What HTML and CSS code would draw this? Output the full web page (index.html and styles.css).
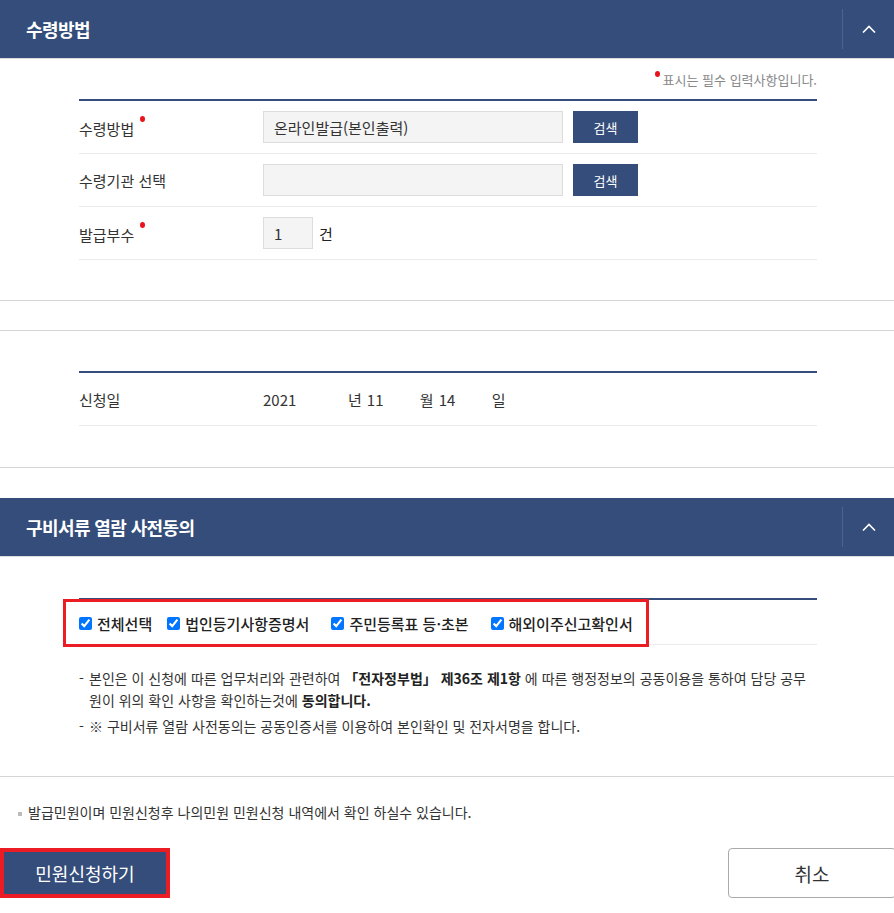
FILE: index.html
```html
<!DOCTYPE html>
<html lang="ko">
<head>
    <meta charset="UTF-8">
    <meta name="viewport" content="width=device-width, initial-scale=1.0">
    <title>민원신청</title>
    <link rel="stylesheet" href="styles.css">
</head>
<body>

    <div class="panel-head">
        <h2>수령방법</h2>
        <button type="button" class="toggle" aria-label="접기">
            <svg width="14" height="8" viewBox="0 0 14 8"><polyline points="1,7.5 7,1.5 13,7.5" fill="none" stroke="#fff" stroke-width="1.6"/></svg>
        </button>
    </div>

    <p class="req-note"><span class="dot"></span>표시는 필수 입력사항입니다.</p>

    <div class="form-box">
        <div class="form-row">
            <div class="label">수령방법<span class="dot"></span></div>
            <input type="text" class="text-input" value="온라인발급(본인출력)" readonly>
            <button type="button" class="btn-search">검색</button>
        </div>
        <div class="form-row">
            <div class="label">수령기관 선택</div>
            <input type="text" class="text-input" value="" readonly>
            <button type="button" class="btn-search">검색</button>
        </div>
        <div class="form-row">
            <div class="label">발급부수<span class="dot"></span></div>
            <input type="text" class="text-input count-input" value="1">
            <span class="unit">건</span>
        </div>
    </div>

    <div class="blank"></div>

    <div class="form-box date-box">
        <div class="form-row">
            <div class="label">신청일</div>
            <div class="date">
                <span class="num year">2021</span><span class="du">년</span><span class="num">11</span><span class="du">월</span><span class="num">14</span><span class="du">일</span>
            </div>
        </div>
    </div>

    <div class="divider"></div>

    <div class="panel-head second">
        <h2>구비서류 열람 사전동의</h2>
        <button type="button" class="toggle" aria-label="접기">
            <svg width="14" height="8" viewBox="0 0 14 8"><polyline points="1,7.5 7,1.5 13,7.5" fill="none" stroke="#fff" stroke-width="1.6"/></svg>
        </button>
    </div>

    <div class="agree-box">
        <div class="agree-list">
            <label class="chk first"><input type="checkbox" checked>전체선택</label>
            <label class="chk"><input type="checkbox" checked>법인등기사항증명서</label>
            <label class="chk"><input type="checkbox" checked>주민등록표 등·초본</label>
            <label class="chk last"><input type="checkbox" checked>해외이주신고확인서</label>
        </div>
    </div>

    <ul class="notes">
        <li><span class="dash">-</span><span>본인은 이 신청에 따른 업무처리와 관련하여 <strong>「전자정부법」 제36조 제1항</strong> 에 따른 행정정보의 공동이용을 통하여 담당 공무원이 위의 확인 사항을 확인하는것에 <strong>동의합니다.</strong></span></li>
        <li><span class="dash">-</span><span>※ 구비서류 열람 사전동의는 공동인증서를 이용하여 본인확인 및 전자서명을 합니다.</span></li>
    </ul>

    <div class="divider notes-end"></div>

    <p class="issue-note">발급민원이며 민원신청후 나의민원 민원신청 내역에서 확인 하실수 있습니다.</p>

    <div class="actions">
        <button type="button" class="btn-apply">민원신청하기</button>
        <button type="button" class="btn-cancel">취소</button>
    </div>

</body>
</html>
```

FILE: styles.css
```css
html, body {
    overflow-x: hidden;
}

body {
    margin: 0;
    font-family: "Noto Sans CJK KR", "Noto Sans", sans-serif;
    color: #333;
    background: #fff;
}

/* 접이식 패널 제목줄 */
.panel-head {
    display: flex;
    align-items: center;
    height: 58px;
    background-color: #344d7a;
    border-bottom: 1px solid #dcdcdc;
}

.panel-head h2 {
    flex: 1;
    margin: 0;
    padding-left: 26px;
    color: #fff;
    font-size: 18px;
    font-weight: 700;
    letter-spacing: -0.6px;
}

.panel-head.second {
    margin-top: 30px;
}

.toggle {
    width: 52px;
    height: 40px;
    padding: 0;
    border: 0;
    border-left: 1px solid #4c6290;
    background: none;
    display: flex;
    align-items: center;
    justify-content: center;
}

.dot {
    display: inline-block;
    width: 5px;
    height: 6px;
    border-radius: 50%;
    background-color: #e8141b;
    vertical-align: 13px;
    margin-left: 6px;
}

.req-note {
    margin: 12px 77px 10px 0;
    text-align: right;
    font-size: 13px;
    line-height: 18px;
    color: #888;
}

.req-note .dot {
    vertical-align: 8px;
    margin: 0 3px 0 0;
}

/* 입력 표 */
.form-box {
    margin: 0 77px 0 79px;
    border-top: 2px solid #344d7a;
}

.form-row {
    display: flex;
    align-items: center;
    min-height: 32px;
    padding: 10px 0;
    border-bottom: 1px solid #ebebeb;
}

.form-row .label {
    width: 184px;
    font-size: 15px;
    color: #333;
}

.text-input {
    width: 300px;
    height: 32px;
    box-sizing: border-box;
    padding: 0 10px;
    background-color: #f4f4f4;
    border: 1px solid #dcdcdc;
    font-family: inherit;
    font-size: 15px;
    color: #333;
}

.count-input {
    width: 50px;
}

.btn-search {
    width: 65px;
    height: 32px;
    margin-left: 10px;
    border: 0;
    background-color: #344d7a;
    color: #fff;
    font-family: inherit;
    font-size: 13px;
}

.unit {
    margin-left: 6px;
    font-size: 15px;
    color: #222;
}

.blank {
    margin-top: 40px;
    height: 29px;
    border-top: 1px solid #d5d5d5;
    border-bottom: 1px solid #d5d5d5;
}

.date-box {
    margin-top: 40px;
}

.date {
    font-size: 15px;
    color: #333;
}

.date .num {
    display: inline-block;
    width: 52px;
}

.date .num.year {
    width: 84px;
}

.date .du {
    margin: 0 5px 0 1px;
    font-size: 15px;
}

.divider {
    margin-top: 41px;
    border-top: 1px solid #d5d5d5;
}

/* 사전동의 */
.agree-box {
    display: flex;
    height: 44px;
    margin: 41px 77px 0 79px;
    border-top: 2px solid #344d7a;
    border-bottom: 1px solid #ebebeb;
}

.agree-list {
    position: relative;
    display: flex;
    align-items: center;
    padding-top: 3px;
}

.agree-list::after {
    content: "";
    position: absolute;
    top: -1px;
    bottom: -3px;
    left: -16px;
    right: -16px;
    border: 3px solid #ec1c24;
}

.chk {
    display: flex;
    align-items: center;
    gap: 5px;
    margin-right: 22px;
    font-size: 15px;
    font-weight: 500;
    color: #222;
}

.chk.first {
    margin-right: 15px;
}

.chk.last {
    margin-right: 0;
}

.chk input {
    width: 13px;
    height: 13px;
    margin: 0;
}

.notes {
    margin: 22px 77px 0 79px;
    padding: 0;
    list-style: none;
    font-size: 14px;
    line-height: 22px;
    color: #333;
}

.notes li {
    display: flex;
}

.notes .dash {
    flex: none;
    width: 10px;
}

.notes li + li {
    margin-top: 4px;
}

.notes strong {
    color: #222;
}

.notes-end {
    margin-top: 39px;
}

.issue-note {
    margin: 25px 0 0;
    padding-left: 18px;
    font-size: 14px;
    line-height: 20px;
    color: #333;
}

.issue-note::before {
    content: "";
    display: inline-block;
    width: 4px;
    height: 4px;
    margin-right: 6px;
    background-color: #bbb;
    vertical-align: middle;
}

/* 하단 버튼 */
.actions {
    display: flex;
    align-items: center;
    justify-content: space-between;
    margin-top: 26px;
    padding-left: 4px;
    margin-right: -2px;
}

.btn-apply {
    width: 162px;
    height: 42px;
    border: 0;
    outline: 4px solid #ec1c24;
    background-color: #344d7a;
    color: #fff;
    font-family: inherit;
    font-size: 18px;
}

.btn-cancel {
    width: 168px;
    height: 50px;
    border: 1px solid #aaa;
    border-radius: 4px;
    background-color: #fff;
    color: #333;
    font-family: inherit;
    font-size: 19px;
}
```
